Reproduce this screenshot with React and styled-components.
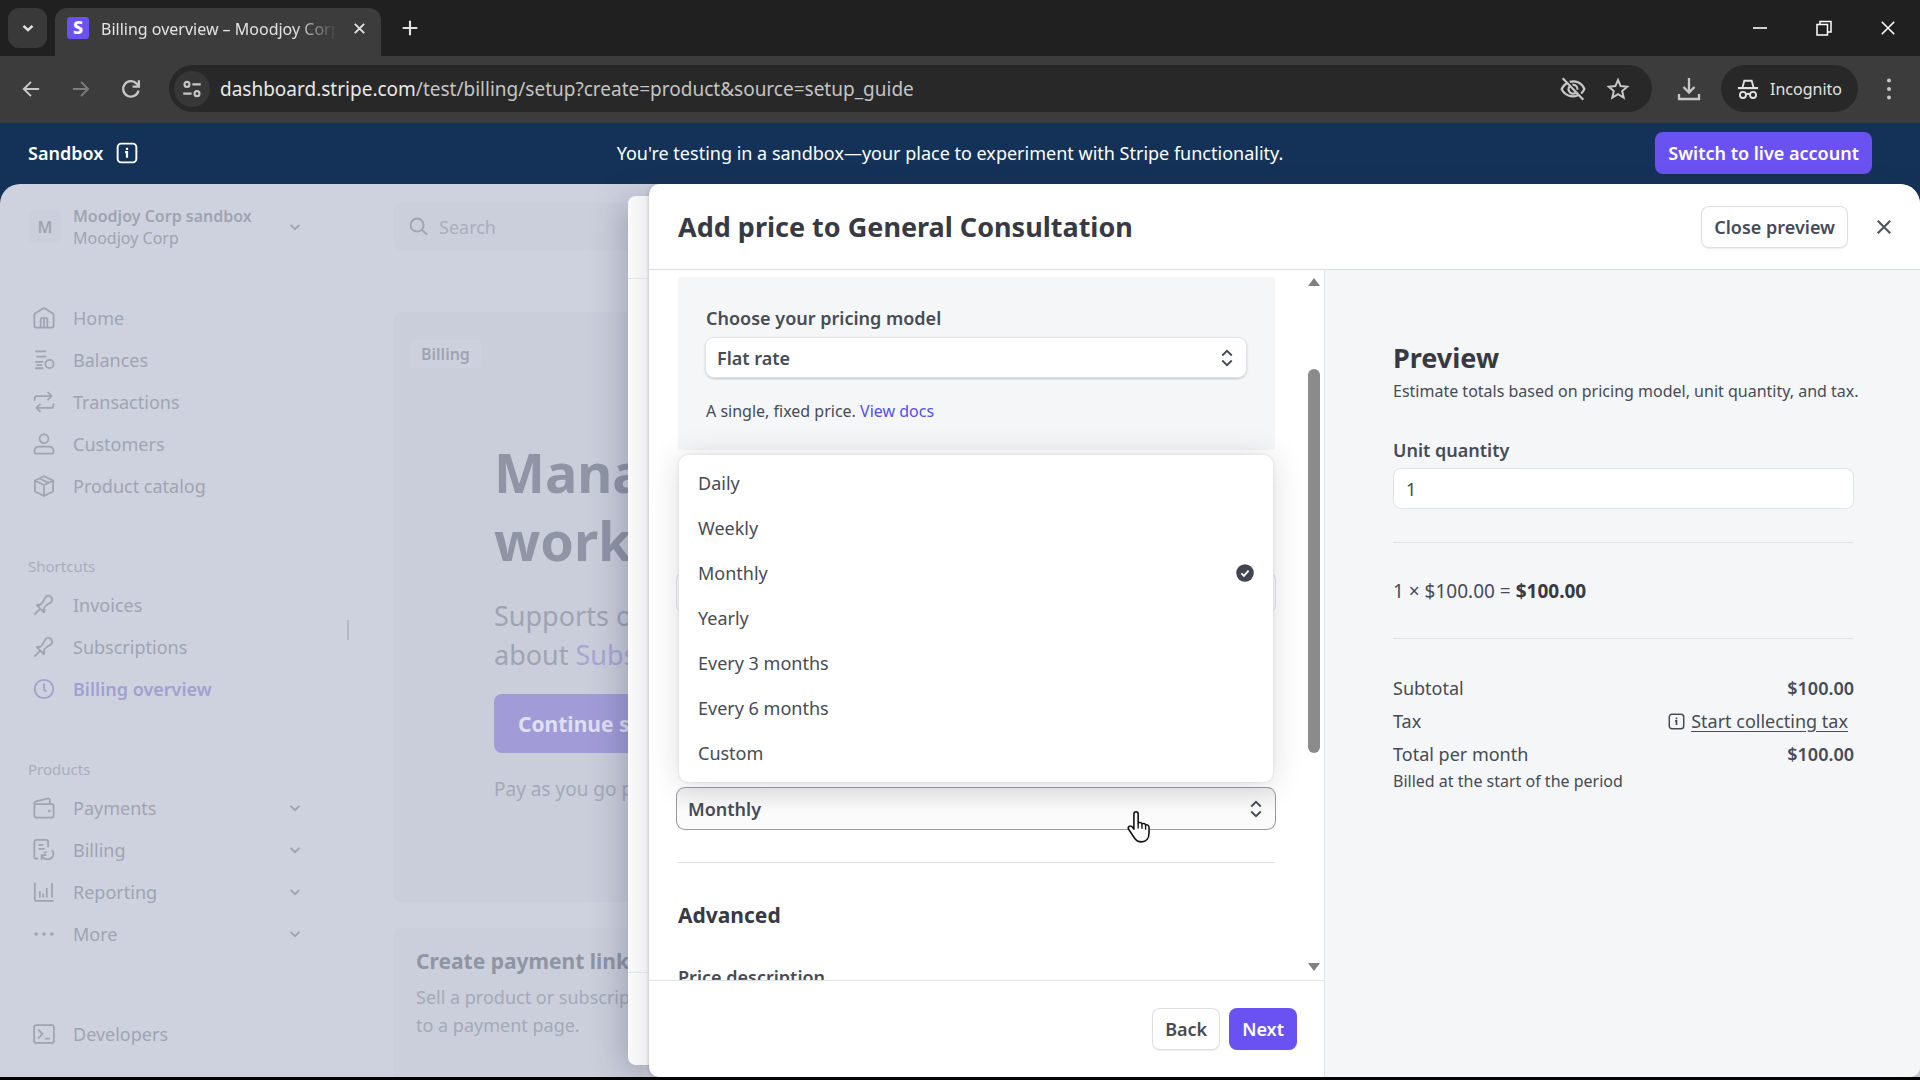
import React from "react";
import styled, { createGlobalStyle } from "styled-components";

const GlobalStyle = createGlobalStyle`
  *, *::before, *::after { box-sizing: border-box; }
  body { margin: 0; background: #000; }
  body, button, input, select { font-family: "Noto Sans", "Open Sans", sans-serif; }
  button, input, select { margin: 0; border: 0; font-size: inherit; }
  h1, h2, h3, p, ul, dl, dd { margin: 0; padding: 0; }
  ul { list-style: none; }
  a { color: inherit; text-decoration: none; }
  svg { display: block; flex: none; }
`;

const Screen = styled.div`
  display: flex;
  flex-direction: column;
  height: 100vh;
  padding-bottom: 3px;
  font-size: 18px;
  line-height: 24px;
  color: #474b55;
  background: #000;
  overflow: hidden;
`;

/* ---------- icons ---------- */

const Svg = ({ size = 22, box = 16, stroke = 1.3, children, ...rest }) => (
  <svg
    width={size}
    height={size}
    viewBox={`0 0 ${box} ${box}`}
    fill="none"
    stroke="currentColor"
    strokeWidth={stroke}
    aria-hidden="true"
    {...rest}
  >
    {children}
  </svg>
);

const ChevronDown = ({ size = 20, stroke = 1.6 }) => (
  <Svg size={size} stroke={stroke}><path d="M4.400 6.300 8 9.700l3.600-3.400" /></Svg>
);
const UpDown = () => (
  <Svg size={20} stroke={1.5}><path d="M4.2 6 8 2.2 11.8 6M4.2 10 8 13.8 11.8 10" /></Svg>
);
const InfoSquare = ({ size = 22 }) => (
  <Svg size={size} stroke={1.4}>
    <rect x="1.2" y="1.2" width="13.6" height="13.6" rx="2.6" />
    <path d="M6.6 7.4H8v4M8 4.2v1.6" strokeWidth="1.6" />
  </Svg>
);
const Cross = ({ size = 20, stroke = 1.5 }) => (
  <Svg size={size} stroke={stroke}><path d="M3 3l10 10M13 3 3 13" /></Svg>
);

const icons = {
  home: (
    <Svg>
      <path d="M1 5.9v7.6c0 .9.6 1.5 1.5 1.5h11c.9 0 1.5-.6 1.5-1.5V5.9c0-.6-.3-1-.8-1.3L8.7 1.1a1.4 1.4 0 0 0-1.4 0L1.8 4.6C1.300 4.900 1 5.300 1 5.900Z" />
      <path d="M5.600 15V9c0-.5.4-.9.900-.9h3c.5 0 .9.4.9.900v6M8 8.500V15" />
    </Svg>
  ),
  balances: (
    <Svg><path d="M1.500 1.700h8.200M2.500 5.500h7.200M1.500 9.300h6M1.500 14h6M2.500 11.700h4" /><circle cx="12" cy="10.900" r="3" /></Svg>
  ),
  transactions: (
    <Svg>
      <path d="M1.200 7V5.500c0-1 .8-1.800 1.800-1.800h10.300M10.600.800l2.900 2.900-2.900 2.900" />
      <path d="M14.800 9v1.500c0 1-.8 1.800-1.800 1.800H2.700M5.400 15.200l-2.900-2.900 2.900-2.900" />
    </Svg>
  ),
  customers: (
    <Svg><circle cx="8" cy="4.100" r="3.200" /><path d="M1 13.500c0-2.300 1.500-3.600 3.400-3.600h7.200c1.900 0 3.400 1.300 3.400 3.600 0 .9-.6 1.500-1.500 1.500h-11c-.9 0-1.500-.6-1.500-1.500Z" /></Svg>
  ),
  catalog: (
    <Svg><path d="M8 .900 14.600 4v8L8 15.200 1.400 12V4ZM1.400 4 8 7.300 14.600 4M8 7.300v7.900M4.700 2.500l6.600 3.200" /></Svg>
  ),
  pin: (
    <Svg>
      <path d="M1 15l4.300-4.300M2.500 7.900l5.600 5.600M4 8.600c1.500-.6 2.500-1.500 3.300-3l1.600-3c1-1.700 2.500-2 4-.6s1.500 3.200-.2 4.300L9.800 8.100c-1.300.9-2.200 2-2.600 4.400M2.500 7.900l2.700-.2M8.100 13.500l.3-2.700" />
    </Svg>
  ),
  clock: (
    <Svg><circle cx="8" cy="8" r="6.700" /><path d="M8 4v4.300l1.700 1.700" /></Svg>
  ),
  payments: (
    <Svg><path d="M1 5.200h12.500c.8 0 1.500.6 1.500 1.400v6.900c0 .8-.7 1.500-1.500 1.500h-11C1.700 15 1 14.300 1 13.500V4.600c0-.8.500-1.300 1.200-1.500l8.300-2c1-.2 1.800.4 1.800 1.400v2.700" /><path d="M11 10.200h1.600" strokeWidth="1.8" /></Svg>
  ),
  billing: (
    <Svg>
      <path d="M4 14.300H2.400c-.8 0-1.400-.6-1.400-1.400V2.100C1 1.300 1.600.7 2.400.7h7.200c.8 0 1.400.6 1.400 1.400V6M4 4.200h3.500M4 7.200h4.500" />
      <path d="M13.600 8.200c.8.700 1.300 1.600 1.300 2.600 0 2.200-1.900 4-4.300 4-1.600 0-3-.8-3.700-2M6.300 15.300v-3.500h3.500M8 10.500c.6-.7 1.200-1 2-1.200" />
    </Svg>
  ),
  reporting: (
    <Svg><path d="M1.300 1v12.400c0 .6.400 1 1 1H15M5 7.500v4.500M7.400 9v3M10 5v7M13.800 1.500V12" /></Svg>
  ),
  more: (
    <Svg stroke={0}><g fill="currentColor"><circle cx="2.300" cy="8" r="1.300" /><circle cx="8" cy="8" r="1.300" /><circle cx="13.700" cy="8" r="1.300" /></g></Svg>
  ),
  developers: (
    <Svg><rect x=".8" y="1.500" width="14.400" height="13" rx="1.500" /><path d="m3.800 4.800 3.200 3.200-3.200 3.200M8.500 11.300h3.700" /></Svg>
  ),
};

/* ---------- browser chrome ---------- */

const IconButton = styled.button`
  display: grid;
  place-items: center;
  flex: none;
  width: ${(p) => p.$w || 36}px;
  height: ${(p) => p.$h || 36}px;
  padding: 0;
  border-radius: ${(p) => p.$r || 18}px;
  color: ${(p) => p.$color || "#c7c7c7"};
  background: ${(p) => p.$bg || "transparent"};
`;

const DownloadButton = styled(IconButton)`
  margin-left: 19px;
`;

const TabStrip = styled.div`
  display: flex;
  flex: none;
  align-items: flex-start;
  height: 56px;
  padding: 8px 0 0 8px;
  background: #202020;
`;

const Tab = styled.div`
  display: flex;
  align-items: center;
  width: 326px;
  height: 48px;
  margin: 0 11px 0 8px;
  padding: 0 8px 8px 12px;
  border-radius: 12px 12px 0 0;
  background: #3c3c3c;
`;

const Favicon = styled.span`
  flex: none;
  width: 22px;
  height: 22px;
  border-radius: 3px;
  background: #6a51f2;
  color: #fff;
  font-size: 18px;
  font-weight: 800;
  line-height: 21px;
  text-align: center;
`;

const TabTitle = styled.span`
  flex: 1;
  min-width: 0;
  margin: 2px 8px 0 12px;
  overflow: hidden;
  white-space: nowrap;
  font-size: 16px;
  color: #e3e3e3;
  mask-image: linear-gradient(90deg, #000 82%, transparent);
`;

const WindowControls = styled.div`
  display: flex;
  gap: 28px;
  margin-left: auto;
  padding: 2px 14px 0 0;
`;

const Toolbar = styled.div`
  display: flex;
  flex: none;
  align-items: center;
  height: 67px;
  padding: 0 13px 2px 13px;
  background: #3c3c3c;
`;

const NavButtons = styled.div`
  display: flex;
  gap: 14px;
  margin-right: 20px;
`;

const AddressBar = styled.div`
  display: flex;
  flex: 1;
  align-items: center;
  height: 47px;
  padding: 0 16px 0 5px;
  border-radius: 24px;
  background: #282828;
`;

const Address = styled.div`
  flex: 1;
  margin-left: 10px;
  font-size: 19px;
  color: #c4c4c4;
  white-space: nowrap;
  b { font-weight: 400; color: #e8e8e8; }
`;

const AddressActions = styled.div`
  display: flex;
  gap: 9px;
`;

const Incognito = styled.button`
  display: flex;
  align-items: center;
  gap: 11px;
  height: 47px;
  margin: 0 13px 0 14px;
  padding: 0 16px;
  border-radius: 24px;
  background: #282828;
  color: #e3e3e3;
  font-size: 16px;
`;

function Browser() {
  return (
    <>
      <TabStrip>
        <IconButton $w={39} $h={40} $r={11} $bg="#393939" $color="#e3e3e3" aria-label="Search tabs">
          <ChevronDown stroke={2} />
        </IconButton>
        <Tab>
          <Favicon>S</Favicon>
          <TabTitle>Billing overview – Moodjoy Corp</TabTitle>
          <IconButton $w={28} $h={28} $color="#e3e3e3" aria-label="Close tab"><Cross size={15} stroke={2} /></IconButton>
        </Tab>
        <IconButton $h={40} $color="#e3e3e3" aria-label="New tab">
          <Svg size={18} stroke={1.900}><path d="M8 1.500v13M1.500 8h13" /></Svg>
        </IconButton>
        <WindowControls>
          <IconButton $color="#fff" aria-label="Minimize"><Svg size={16} stroke={1.600}><path d="M1 8h14" /></Svg></IconButton>
          <IconButton $color="#fff" aria-label="Restore"><Svg size={16} stroke={1.500}><path d="M1 4.500h10.500V15H1ZM4 4.500V1.500h11V12h-3.500" /></Svg></IconButton>
          <IconButton $color="#fff" aria-label="Close"><Cross size={20} stroke={1.300} /></IconButton>
        </WindowControls>
      </TabStrip>
      <Toolbar>
        <NavButtons>
          <IconButton aria-label="Back"><Svg size={20} stroke={1.600}><path d="M14.500 8H2M8 2.300 2.300 8 8 13.700" /></Svg></IconButton>
          <IconButton $color="#7c7c7c" aria-label="Forward"><Svg size={20} stroke={1.500}><path d="M1.500 8H14M8 2.300 13.700 8 8 13.700" /></Svg></IconButton>
          <IconButton aria-label="Reload"><Svg size={20} stroke={1.800}><path d="M14 9.300A6.200 6.200 0 1 1 12.500 3.700L14 5.200M14.300 1v5H9.300" /></Svg></IconButton>
        </NavButtons>
        <AddressBar>
          <IconButton $bg="#373737" aria-label="Site information">
            <Svg size={20} stroke={1.700}><circle cx="4" cy="4.300" r="2" /><path d="M8.300 4.300H15M1 11.700h6.700" /><circle cx="12" cy="11.700" r="2" /></Svg>
          </IconButton>
          <Address><b>dashboard.stripe.com</b>/test/billing/setup?create=product&amp;source=setup_guide</Address>
          <AddressActions>
            <IconButton aria-label="Third-party cookies blocked">
              <Svg size={26} box={24} stroke={2}><path d="M9 5.400A11 11 0 0 1 22.500 12a12 12 0 0 1-3 4.200M6.300 6.700A11.500 11.500 0 0 0 1.500 12a11.300 11.300 0 0 0 15 5.700M8.800 9.500a4.200 4.200 0 0 0 5.700 6M11.500 8a4.200 4.200 0 0 1 4.600 4.700M2.500 2l19 20" /></Svg>
            </IconButton>
            <IconButton aria-label="Bookmark">
              <Svg size={24} box={24} stroke={2}><path d="m12 3 2.600 6.100 6.600.6-5 4.400 1.500 6.500-5.700-3.500-5.700 3.500 1.500-6.500-5-4.400 6.600-.6Z" /></Svg>
            </IconButton>
          </AddressActions>
        </AddressBar>
        <DownloadButton aria-label="Downloads">
          <Svg size={24} box={24} stroke={2.300}><path d="M12 1v14M6.500 10l5.500 5.500L17.500 10M2 17v5h20v-5" /></Svg>
        </DownloadButton>
        <Incognito>
          <Svg size={22} box={24} stroke={2}><path d="M1 11h22" strokeWidth="2.400" /><path d="M6 10 8 3h8l2 7" /><circle cx="6.500" cy="18.500" r="3.300" /><circle cx="17.500" cy="18.500" r="3.300" /><path d="M10 18c1-.8 3-.8 4 0" /></Svg>
          Incognito
        </Incognito>
        <IconButton aria-label="Menu">
          <Svg size={24} box={24} stroke={0}><g fill="currentColor"><circle cx="12" cy="3.500" r="2" /><circle cx="12" cy="12" r="2" /><circle cx="12" cy="20.500" r="2" /></g></Svg>
        </IconButton>
      </Toolbar>
    </>
  );
}

/* ---------- sandbox banner ---------- */

const Banner = styled.header`
  display: grid;
  grid-template-columns: 1fr auto 1fr;
  align-items: center;
  flex: none;
  height: 61px;
  padding: 0 48px 1px 28px;
  background: #143257;
  color: #fff;
`;

const BannerLabel = styled.span`
  display: flex;
  align-items: center;
  gap: 13px;
  font-weight: 600;
`;

const Button = styled.button`
  height: 42px;
  padding: 0 13px;
  border-radius: 8px;
  font-weight: 600;
  white-space: nowrap;
  color: ${(p) => (p.$primary ? "#fff" : "#474b55")};
  background: ${(p) => (p.$primary ? "#6a51f2" : "#fff")};
  box-shadow: ${(p) => (p.$primary ? "none" : "inset 0 0 0 1px #dcdfe4, 0 1px 1px rgba(0,0,0,.08)")};
  justify-self: end;
`;

/* ---------- dashboard behind the drawers ---------- */

const Stage = styled.div`
  position: relative;
  flex: 1;
  min-height: 0;
  background: #143257;
`;

const Dashboard = styled.div`
  display: flex;
  height: 100%;
  border-radius: 20px 20px 0 0;
  background: #ced2de;
  color: #9fa4b2;
  overflow: hidden;
`;

const Sidebar = styled.nav`
  flex: none;
  width: 347px;
  padding: 20px 42px 0 28px;
`;

const Account = styled.button`
  display: flex;
  align-items: center;
  width: 100%;
  height: 46px;
  margin-bottom: 47px;
  padding: 0 0 0 1px;
  gap: 12px;
  background: none;
  color: inherit;
  text-align: left;
  line-height: 22px;
`;

const Avatar = styled.span`
  display: grid;
  place-items: center;
  width: 32px;
  height: 32px;
  border-radius: 4px;
  background: #cbcfdb;
  font-size: 16px;
  font-weight: 600;
`;

const AccountText = styled.span`
  flex: 1;
  font-size: 16px;
  white-space: nowrap;
  b { display: block; font-weight: 600; }
`;

const NavGroup = styled.div`
  margin-bottom: ${(p) => p.$gap || 41}px;
`;

const GroupLabel = styled.h3`
  font-size: 15px;
  font-weight: 400;
  line-height: 36px;
  color: #a9aebc;
`;

const NavItem = styled.a`
  display: flex;
  align-items: center;
  gap: 18px;
  height: 42px;
  padding-left: 5px;
  font-weight: ${(p) => (p.$active ? 600 : 400)};
  color: ${(p) => (p.$active ? "#a29fd2" : "inherit")};
  span { flex: 1; }
`;

const ResizeHandle = styled.div`
  align-self: flex-start;
  flex: none;
  width: 2px;
  height: 20px;
  margin-top: 436px;
  background: #b6bac8;
`;

const Main = styled.main`
  flex: 1;
  max-width: 294px;
  padding: 19px 0 0 44px;
  white-space: nowrap;
  overflow: hidden;
`;

const SearchBox = styled.label`
  display: flex;
  align-items: center;
  gap: 11px;
  height: 47px;
  padding-left: 16px;
  border-radius: 8px;
  background: #cbcfdb;
  input { flex: 1; min-width: 0; padding: 0; background: none; outline: none; }
  input::placeholder { color: #a9aebc; opacity: 1; }
`;

const Hero = styled.section`
  height: 590px;
  margin: 62px 0 26px;
  padding: 28px 0 0 17px;
  border-radius: 8px;
  background: #cacedb;
`;

const Chip = styled.span`
  display: inline-block;
  padding: 0 11px;
  border-radius: 4px;
  background: #cdd1dd;
  font-size: 16px;
  font-weight: 600;
  line-height: 28px;
`;

const HeroBody = styled.div`
  padding: 70px 0 0 84px;
`;

const HeroTitle = styled.h1`
  font-size: 54px;
  font-weight: 700;
  line-height: 68px;
  color: #8f95a4;
`;

const HeroText = styled.p`
  margin: 22px 0 20px;
  font-size: 27px;
  line-height: 39px;
  a { color: #a7a6d4; }
`;

const HeroButton = styled.button`
  height: 59px;
  padding: 0 24px;
  border-radius: 8px;
  background: #a19cd7;
  color: #dfe0f2;
  font-size: 21px;
  font-weight: 700;
`;

const HeroNote = styled.p`
  margin-top: 22px;
  font-size: 19px;
  line-height: 28px;
  color: #a4a9b8;
`;

const PromoCard = styled.section`
  height: 160px;
  padding: 19px 0 0 23px;
  border-radius: 8px;
  background: #cbcfdb;
  line-height: 28px;
  color: #a4a9b8;
  h2 { margin-bottom: 8px; font-size: 21px; font-weight: 700; color: #8f95a4; }
`;

const groups = [
  { items: [["Home", "home"], ["Balances", "balances"], ["Transactions", "transactions"], ["Customers", "customers"], ["Product catalog", "catalog"]] },
  { label: "Shortcuts", items: [["Invoices", "pin"], ["Subscriptions", "pin"], ["Billing overview", "clock", { active: true }]] },
  { label: "Products", gap: 58, items: [["Payments", "payments", { more: true }], ["Billing", "billing", { more: true }], ["Reporting", "reporting", { more: true }], ["More", "more", { more: true }]] },
  { items: [["Developers", "developers"]] },
];

function DashboardPage() {
  return (
    <Dashboard>
      <Sidebar>
        <Account>
          <Avatar>M</Avatar>
          <AccountText><b>Moodjoy Corp sandbox</b>Moodjoy Corp</AccountText>
          <ChevronDown />
        </Account>
        {groups.map((g, i) => (
          <NavGroup key={i} $gap={g.gap}>
            {g.label && <GroupLabel>{g.label}</GroupLabel>}
            {g.items.map(([name, icon, o = {}]) => (
              <NavItem key={name} href="#" $active={o.active}>
                {icons[icon]}
                <span>{name}</span>
                {o.more && <ChevronDown />}
              </NavItem>
            ))}
          </NavGroup>
        ))}
      </Sidebar>
      <ResizeHandle />
      <Main>
        <SearchBox>
          <Svg size={19} stroke={1.600}><circle cx="6.800" cy="6.800" r="5.500" /><path d="m11 11 4.300 4" /></Svg>
          <input type="search" placeholder="Search" aria-label="Search" />
        </SearchBox>
        <Hero>
          <Chip>Billing</Chip>
          <HeroBody>
            <HeroTitle>Manage<br />works</HeroTitle>
            <HeroText>Supports one<br />about <a href="#">Subscriptions</a></HeroText>
            <HeroButton>Continue setup</HeroButton>
            <HeroNote>Pay as you go plan</HeroNote>
          </HeroBody>
        </Hero>
        <PromoCard>
          <h2>Create payment link</h2>
          <p>Sell a product or subscription<br />to a payment page.</p>
        </PromoCard>
      </Main>
    </Dashboard>
  );
}

/* ---------- drawers ---------- */

const BackDrawer = styled.div`
  position: absolute;
  inset: 12px 0 12px 628px;
  display: flex;
  flex-direction: column;
  justify-content: space-between;
  border-radius: 8px;
  background: linear-gradient(90deg, #fbfbfb, #ededef 21px);
  box-shadow: -4px 6px 34px rgba(48, 49, 86, .3);
  &::before, &::after { content: ""; border: solid #e2e3e6; }
  &::before { height: 83px; border-width: 0 0 1px; }
  &::after { height: 93px; border-width: 1px 0 0; }
`;

const Drawer = styled.section`
  position: absolute;
  inset: 0 0 0 649px;
  display: flex;
  flex-direction: column;
  border-radius: 10px 20px 10px 10px;
  background: #fff;
  box-shadow: -1px 0 3px rgba(48, 49, 61, .18);
  overflow: hidden;
`;

const DrawerHeader = styled.header`
  display: flex;
  align-items: center;
  flex: none;
  gap: 18px;
  height: 86px;
  padding: 0 18px 0 29px;
  border-bottom: 1px solid #d9dce1;
  h2 { flex: 1; font-size: 27px; font-weight: 700; color: #373a42; }
`;

const Columns = styled.div`
  display: flex;
  flex: 1;
  min-height: 0;
`;

const FormColumn = styled.div`
  display: flex;
  flex: 1;
  flex-direction: column;
  border-right: 1px solid #e3e5ea;
`;

const ScrollArea = styled.div`
  display: flex;
  flex: 1;
  min-height: 0;
`;

const Form = styled.form`
  flex: 1;
  padding: 7px 27px 0 29px;
  overflow: hidden;
  hr { margin: 32px 0 38px; }
  h3 { font-size: 21px; font-weight: 700; line-height: 28px; color: #373a42; }
`;

const Rule = styled.hr`
  height: 1px;
  margin: 0;
  border: 0;
  background: #dcdfe4;
`;

const ModelCard = styled.div`
  height: 173px;
  padding: 27px 28px;
  background: #f5f6f8;
  p { margin-top: 20px; font-size: 16px; line-height: 26px; }
  p a { color: #5b4fe0; }
`;

const Label = styled.label`
  display: block;
  font-weight: 600;
  line-height: 28px;
`;

const SelectWrap = styled.div`
  position: relative;
  display: grid;
  align-items: center;
  margin: ${(p) => (p.$wide ? "0 -1px 0 -2px" : "5px 0 0 -1px")};
  > select, > svg { grid-area: 1 / 1; }
  > svg { justify-self: end; margin-right: 10px; pointer-events: none; }
`;

const Select = styled.select`
  appearance: none;
  width: 100%;
  height: ${(p) => (p.$open ? 43 : 41)}px;
  padding: 0 12px;
  border-radius: 9px;
  outline: none;
  color: #474b55;
  font-weight: 600;
  background: ${(p) => (p.$open ? "linear-gradient(#ececee, #fbfbfb 60%)" : "#fff")};
  box-shadow: ${(p) => (p.$open ? "inset 0 0 0 1px #9599a2" : "inset 0 0 0 1px #dfe2e7, 0 1px 2px rgba(48,49,61,.25)")};
`;

const TextInput = styled.input`
  display: block;
  width: 100%;
  height: 41px;
  padding: 0 13px;
  border-radius: 8px;
  outline: none;
  background: #fff;
  color: #474b55;
  box-shadow: inset 0 0 0 1px #dfe2e7;
`;

const AmountField = styled.div`
  margin: 122px -1px 174px -2px;
`;

const Menu = styled.ul`
  position: absolute;
  left: 3px;
  right: 3px;
  bottom: calc(100% + 5px);
  padding: 5px 0 7px;
  border-radius: 9px;
  background: #fff;
  box-shadow: 0 2px 30px rgba(48, 49, 61, .17), 0 0 3px rgba(48, 49, 61, .14);
`;

const Option = styled.li`
  display: flex;
  align-items: center;
  justify-content: space-between;
  height: 45px;
  padding: 0 19px;
`;

const Pointer = styled.svg`
  position: absolute;
  right: 114px;
  top: 23px;
  z-index: 2;
`;

const ClippedLabel = styled(Label)`
  margin-top: 34px;
`;

const ScrollBar = styled.div`
  display: flex;
  flex: none;
  flex-direction: column;
  align-items: center;
  width: 22px;
  padding: 7px 0 8px 2px;
  color: #808080;
`;

const ScrollThumb = styled.div`
  width: 12px;
  height: 384px;
  margin: 82px 0 auto;
  border-radius: 6px;
  background: #8b8b8b;
`;

const FormFooter = styled.footer`
  display: flex;
  justify-content: flex-end;
  flex: none;
  gap: 9px;
  height: 97px;
  padding: 27px 27px 0;
  border-top: 1px solid #dfe2e7;
`;

const Preview = styled.aside`
  flex: none;
  width: 595px;
  padding: 72px 66px 0 68px;
  background: #f5f6f8;
  h3 { margin-bottom: 7px; font-size: 27px; font-weight: 700; line-height: 32px; color: #373a42; }
`;

const Small = styled.p`
  font-size: 16px;
  line-height: 20px;
  white-space: nowrap;
`;

const QuantityField = styled.div`
  margin: 35px 0 33px;
  label { margin-bottom: 4px; }
`;

const Calculation = styled.p`
  padding: 35px 0 34px;
  font-size: 19px;
  line-height: 26px;
  b { font-weight: 700; color: #373a42; }
`;

const Totals = styled.dl`
  padding-top: 33px;
`;

const TotalRow = styled.div`
  display: flex;
  justify-content: space-between;
  line-height: 33px;
  dd { display: flex; align-items: center; gap: 6px; font-weight: ${(p) => (p.$light ? 400 : 600)}; }
  a { margin-right: 6px; text-decoration: underline; text-underline-offset: 3px; }
`;

const periods = ["Daily", "Weekly", "Monthly", "Yearly", "Every 3 months", "Every 6 months", "Custom"];

const HandPointer = () => (
  <Pointer width="26" height="34" viewBox="0 0 28 36" aria-hidden="true">
    <path
      d="M8.500 4.200c0-1.600 1-2.700 2.300-2.700s2.300 1.100 2.300 2.700v9.600c.5-.9 3.700-1 4.100 1 .8-1 3.600-.7 3.900 1.200 1.400-.8 3.700 0 3.700 2.300v6.200c0 5.600-3.200 9.500-8.200 9.500-3.600 0-5.800-1.500-7.500-4.200L3 20.700c-.9-1.500-.6-2.800.4-3.400 1.300-.8 2.700-.2 3.600 1l1.500 2Z"
      fill="#fff" stroke="#111" strokeWidth="1.700" strokeLinejoin="round"
    />
    <path d="M13.100 13.500v6M17.200 15v5M21.100 16.500v4.500" stroke="#111" strokeWidth="1.500" fill="none" />
  </Pointer>
);

const Triangle = ({ down }) => (
  <svg width="14" height="10" viewBox="0 0 14 10" aria-hidden="true">
    <path d={down ? "M1 1h12L7 9Z" : "M1 9h12L7 1Z"} fill="currentColor" />
  </svg>
);

function PriceDrawer() {
  return (
    <Drawer>
      <DrawerHeader>
        <h2>Add price to General Consultation</h2>
        <Button>Close preview</Button>
        <IconButton $color="#50545f" aria-label="Close"><Cross size={20} stroke={1.700} /></IconButton>
      </DrawerHeader>
      <Columns>
        <FormColumn>
          <ScrollArea>
            <Form>
              <ModelCard>
                <Label htmlFor="model">Choose your pricing model</Label>
                <SelectWrap>
                  <Select id="model"><option>Flat rate</option></Select>
                  <UpDown />
                </SelectWrap>
                <p>A single, fixed price. <a href="#">View docs</a></p>
              </ModelCard>
              <AmountField><TextInput aria-label="Amount" /></AmountField>
              <SelectWrap $wide>
                <Select $open aria-label="Billing period" defaultValue="Monthly">
                  {periods.map((p) => <option key={p}>{p}</option>)}
                </Select>
                <UpDown />
                <Menu role="listbox" aria-label="Billing period">
                  {periods.map((p) => (
                    <Option key={p} role="option" aria-selected={p === "Monthly"}>
                      {p}
                      {p === "Monthly" && (
                        <Svg size={18} stroke={1.700}><circle cx="8" cy="8" r="7.800" fill="#414552" stroke="none" /><path d="m4.800 8.300 2.200 2.200 4.200-4.700" stroke="#fff" /></Svg>
                      )}
                    </Option>
                  ))}
                </Menu>
                <HandPointer />
              </SelectWrap>
              <Rule />
              <h3>Advanced</h3>
              <ClippedLabel as="p">Price description</ClippedLabel>
            </Form>
            <ScrollBar>
              <Triangle />
              <ScrollThumb />
              <Triangle down />
            </ScrollBar>
          </ScrollArea>
          <FormFooter>
            <Button>Back</Button>
            <Button $primary>Next</Button>
          </FormFooter>
        </FormColumn>
        <Preview>
          <h3>Preview</h3>
          <Small>Estimate totals based on pricing model, unit quantity, and tax.</Small>
          <QuantityField>
            <Label htmlFor="qty">Unit quantity</Label>
            <TextInput id="qty" defaultValue="1" />
          </QuantityField>
          <Rule />
          <Calculation>1 × $100.00 = <b>$100.00</b></Calculation>
          <Rule />
          <Totals>
            <TotalRow><dt>Subtotal</dt><dd>$100.00</dd></TotalRow>
            <TotalRow $light><dt>Tax</dt><dd><InfoSquare size={17} /><a href="#">Start collecting tax</a></dd></TotalRow>
            <TotalRow><dt>Total per month</dt><dd>$100.00</dd></TotalRow>
          </Totals>
          <Small>Billed at the start of the period</Small>
        </Preview>
      </Columns>
    </Drawer>
  );
}

export default function App() {
  return (
    <Screen>
      <GlobalStyle />
      <Browser />
      <Banner>
        <BannerLabel>Sandbox <InfoSquare /></BannerLabel>
        <span>You're testing in a sandbox—your place to experiment with Stripe functionality.</span>
        <Button $primary>Switch to live account</Button>
      </Banner>
      <Stage>
        <DashboardPage />
        <BackDrawer />
        <PriceDrawer />
      </Stage>
    </Screen>
  );
}
